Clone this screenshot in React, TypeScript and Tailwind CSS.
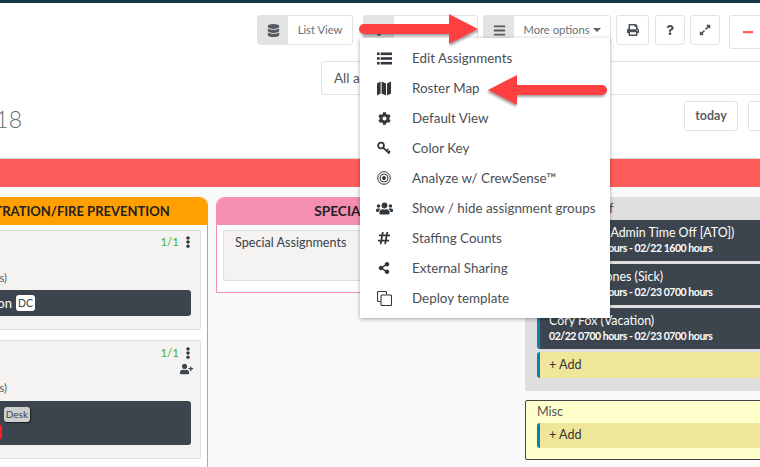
import type { ReactNode } from 'react';
import {
  FaBars,
  FaCog,
  FaDatabase,
  FaEllipsisV,
  FaExpandAlt,
  FaHashtag,
  FaMinus,
  FaPrint,
  FaQuestion,
  FaShareAlt,
  FaUserPlus,
  FaUsers,
} from 'react-icons/fa';

function ListIcon() {
  return (
    <svg viewBox="0 0 15 13" className="h-[13px] w-[15px]" fill="currentColor">
      <rect x="0" y="0.5" width="2.6" height="2.6" />
      <rect x="0" y="5.2" width="2.6" height="2.6" />
      <rect x="0" y="9.9" width="2.6" height="2.6" />
      <rect x="3.6" y="0.5" width="11.4" height="2.6" />
      <rect x="3.6" y="5.2" width="11.4" height="2.6" />
      <rect x="3.6" y="9.9" width="11.4" height="2.6" />
    </svg>
  );
}

function MapIcon() {
  return (
    <svg viewBox="0 0 14 15" className="h-[15px] w-[14px]" fill="currentColor">
      <path d="M0 2.5 L3.6 0.5 V12.5 L0 14.5 Z" />
      <path d="M4.6 0.5 L9 2.5 V14.5 L4.6 12.5 Z" />
      <path d="M10 2.5 L14 0.5 V12.5 L10 14.5 Z" />
    </svg>
  );
}

function KeyIcon() {
  return (
    <svg viewBox="0 0 14 14" className="h-[14px] w-[14px]" fill="none" stroke="currentColor" strokeWidth="1.8">
      <circle cx="4" cy="4.5" r="2.9" />
      <path d="M6 6.6 L12.5 12.6 M9.6 9.9 L11.4 8.2 M11.4 11.6 L13 10" />
    </svg>
  );
}

function TargetIcon() {
  return (
    <svg viewBox="0 0 14 14" className="h-[14px] w-[14px]" fill="none" stroke="currentColor">
      <circle cx="7" cy="7" r="6.3" strokeWidth="1" />
      <circle cx="7" cy="7" r="4" strokeWidth="1" />
      <circle cx="7" cy="7" r="1.6" fill="currentColor" strokeWidth="0.8" />
    </svg>
  );
}

function CloneIcon() {
  return (
    <svg viewBox="0 0 15 15" className="h-[15px] w-[15px]" fill="none" stroke="currentColor" strokeWidth="1.1">
      <path d="M3.5 10.5 H1.5 a1 1 0 0 1 -1 -1 V1.5 a1 1 0 0 1 1 -1 H8.5 a1 1 0 0 1 1 1 V3.5" />
      <rect x="4" y="4" width="10.5" height="10.5" rx="1" />
    </svg>
  );
}

const menuItems: { label: string; icon: ReactNode }[] = [
  { label: 'Edit Assignments', icon: <ListIcon /> },
  { label: 'Roster Map', icon: <MapIcon /> },
  { label: 'Default View', icon: <FaCog className="h-[13px] w-[13px]" /> },
  { label: 'Color Key', icon: <KeyIcon /> },
  { label: 'Analyze w/ CrewSense™', icon: <TargetIcon /> },
  { label: 'Show / hide assignment groups', icon: <FaUsers className="h-[17px] w-[17px]" /> },
  { label: 'Staffing Counts', icon: <FaHashtag className="h-[14px] w-[14px]" /> },
  { label: 'External Sharing', icon: <FaShareAlt className="h-[12px] w-[12px]" /> },
  { label: 'Deploy template', icon: <CloneIcon /> },
];

function ToolbarButton({ icon, label }: { icon: ReactNode; label: ReactNode }) {
  return (
    <div className="flex h-[30px] items-stretch overflow-hidden rounded-[3px] border border-[#e2e2e2] bg-white text-[11.2px] text-[#6b7076]">
      <div className="flex w-[30px] shrink-0 items-center justify-center bg-[#e3e3e3] text-[#555b60]">{icon}</div>
      <div className="flex flex-1 items-center justify-center whitespace-nowrap">{label}</div>
    </div>
  );
}

function IconButton({ children, className }: { children: ReactNode; className: string }) {
  return (
    <div className={`flex h-[30px] shrink-0 items-center justify-center rounded-[3px] border border-[#e2e2e2] bg-white text-[#4a5158] ${className}`}>
      {children}
    </div>
  );
}

function Arrow({ className, flip }: { className: string; flip?: boolean }) {
  return (
    <svg
      viewBox="0 0 120 32"
      className={`absolute h-[32px] w-[120px] drop-shadow-[1px_2px_1px_rgba(0,0,0,0.35)] ${flip ? '-scale-x-100' : ''} ${className}`}
    >
      <path d="M5 11 H90 V1 L119 16 L90 31 V21 H5 a5 5 0 0 1 0 -10 Z" fill="#ff4040" />
    </svg>
  );
}

function CrewCard({ name, dates }: { name: string; dates: string }) {
  return (
    <div className="h-[41px] rounded-l-[3px] border-l-[3px] border-[#0f7fae] bg-[#3c454e] pt-[5px] pl-[9px] whitespace-nowrap text-white">
      <div className="text-[12.4px] leading-[16px]">{name}</div>
      <div className="text-[10.5px] leading-[14px] font-bold tracking-[-0.45px]">{dates}</div>
    </div>
  );
}

function AddRow({ className }: { className: string }) {
  return (
    <div className={`flex items-center rounded-l-[3px] border-l-[3px] border-[#0f7fae] bg-[#f0e69a] pl-[9px] text-[12.6px] text-[#333] ${className}`}>
      + Add
    </div>
  );
}

function Count() {
  return (
    <div className="flex items-center justify-end gap-[4px] text-[11.5px] text-[#4caf1a]">
      1/1
      <FaEllipsisV className="h-[12px] w-[10px] text-[#333]" />
    </div>
  );
}

export default function App() {
  return (
    <div className="relative h-[467px] w-[760px] overflow-hidden bg-white font-['Lato','Open_Sans',sans-serif] text-[#3b4249]">
      <div className="h-[3px] bg-[#17374a]" />

      <div className="mt-[12px] ml-[257px] flex w-[600px] items-start">
        <div className="w-[96px] shrink-0">
          <ToolbarButton icon={<FaDatabase className="h-[13px] w-[13px]" />} label="List View" />
        </div>
        <div className="ml-[10px] w-[115px] shrink-0">
          <ToolbarButton icon={<FaCog className="h-[12px] w-[12px]" />} label="Columns" />
        </div>
        <div className="ml-[5px] w-[128px] shrink-0">
          <ToolbarButton
            icon={<FaBars className="h-[13px] w-[13px]" />}
            label={
              <span className="flex items-center gap-[3px]">
                More options
                <span className="mt-[1px] h-0 w-0 border-x-[4px] border-t-[4px] border-x-transparent border-t-[#5d6268]" />
              </span>
            }
          />
        </div>
        <IconButton className="ml-[5px] w-[33px]">
          <FaPrint className="h-[12px] w-[12px]" />
        </IconButton>
        <IconButton className="ml-[6px] w-[30px]">
          <FaQuestion className="h-[10px] w-[10px]" />
        </IconButton>
        <IconButton className="ml-[5px] w-[30px]">
          <FaExpandAlt className="h-[12px] w-[12px]" />
        </IconButton>
        <IconButton className="ml-[9px] !h-[34px] w-[60px] !justify-start pl-[12px]">
          <FaMinus className="h-[12px] w-[12px] text-[#ff5c5c]" />
        </IconButton>
      </div>

      <div className="mt-[12px] ml-[321px] flex h-[34px] w-[500px] items-center rounded-[3px] border border-[#dfe3e5] bg-white pl-[12px] text-[13.5px] text-[#555]">
        All assignments
      </div>

      <div className="mt-[6px] flex h-[30px] items-center">
        <div className="-ml-[180px] w-[202px] shrink-0 pt-[6px] text-right text-[23px] font-light whitespace-nowrap text-[#5f6b75]">
          February 22, 2018
        </div>
        <div className="ml-[662px] flex h-[30px] w-[54px] shrink-0 items-center justify-center rounded-[3px] border border-[#e2e2e2] text-[12.5px] font-bold text-[#5b6268]">
          today
        </div>
        <div className="ml-[10px] h-[30px] w-[60px] shrink-0 rounded-[3px] border border-[#e2e2e2]" />
      </div>

      <div className="mt-[27px] h-[29px] border-t border-[#d8d8d8] bg-[#ff5c5c]" />

      <div className="flex h-[280px] items-start bg-[#f9f9f9] pt-[10px]">
        <div className="-ml-[100px] h-[276px] w-[308px] shrink-0 rounded-t-[8px] border border-[#ffa000] bg-white">
          <div className="flex h-[27px] items-center justify-center rounded-t-[7px] bg-[#ffa000] text-[13px] font-bold whitespace-nowrap text-[#222]">
            ADMINISTRATION/FIRE PREVENTION
          </div>
          <div className="mx-[6px] mt-[5px] h-[100px] rounded-[2px] border border-[#dedede] bg-[#f4f3f2] pt-[2px] pr-[7px]">
            <Count />
            <div className="mt-[20px] pr-[186px] text-right text-[11px] leading-[16px] text-[#555]">(24 hours)</div>
            <div className="mt-[4px] mr-[2px] flex h-[26px] items-center justify-end rounded-[3px] bg-[#3c454e] pr-[156px] text-[13px] text-white">
              Captain Station
              <span className="ml-[4px] rounded-[3px] bg-white px-[2px] text-[10.5px] leading-[16px] text-[#3c454e]">DC</span>
            </div>
          </div>
          <div className="mx-[6px] mt-[10px] h-[119px] rounded-[2px] border border-[#dedede] bg-[#f4f3f2] pt-[3px] pr-[7px]">
            <Count />
            <div className="mt-[2px] flex justify-end">
              <FaUserPlus className="h-[12px] w-[13px] text-[#3c454e]" />
            </div>
            <div className="mt-[5px] pr-[186px] text-right text-[11px] leading-[16px] text-[#555]">(24 hours)</div>
            <div className="mt-[5px] mr-[2px] h-[44px] overflow-hidden rounded-[3px] bg-[#3c454e] pt-[6px] pr-[161px]">
              <div className="flex justify-end">
                <span className="rounded-[3px] bg-[#cfcfcf] px-[2px] text-[10px] leading-[15px] text-[#3c454e] shadow-[1px_1px_1px_rgba(0,0,0,0.6)]">
                  Desk
                </span>
              </div>
              <div className="mt-[3px] mr-[28px] ml-auto h-[14px] w-[30px] rounded-[2px] bg-[#ff1f1f]" />
            </div>
          </div>
        </div>

        <div className="ml-[8px] h-[96px] w-[301px] shrink-0 rounded-t-[8px] border border-[#f48fb1] bg-white">
          <div className="flex h-[27px] items-center justify-center rounded-t-[7px] bg-[#f48fb1] text-[13.7px] font-bold whitespace-nowrap text-[#222]">
            SPECIAL DUTIES
          </div>
          <div className="mx-[6px] mt-[5px] h-[51px] rounded-[2px] border border-[#dedede] bg-[#f4f3f2] pt-[3px] pl-[11px] text-[12.6px]">
            Special Assignments
          </div>
        </div>

        <div className="ml-[8px] w-[260px] shrink-0">
          <div className="h-[194px] rounded-[2px] bg-[#dfdfdf] pt-[3px] pl-[12px]">
            <div className="h-[20px] text-[12.6px] leading-[18px]">Personnel Off</div>
            <div className="flex flex-col gap-[3px]">
              <CrewCard name="Alan Reed (Admin Time Off [ATO])" dates="02/22 0700 hours - 02/22 1600 hours" />
              <CrewCard name="Matthew Jones (Sick)" dates="02/22 0700 hours - 02/23 0700 hours" />
              <CrewCard name="Cory Fox (Vacation)" dates="02/22 0700 hours - 02/23 0700 hours" />
            </div>
            <AddRow className="mt-[3px] h-[26px]" />
          </div>
          <div className="mt-[9px] h-[60px] rounded-[2px] border border-[#444] bg-[#ffffcc] pt-[2px] pl-[11px]">
            <div className="h-[20px] text-[12.6px] leading-[18px] text-[#555]">Misc</div>
            <AddRow className="h-[25px]" />
          </div>
        </div>
      </div>

      <div className="absolute top-[38px] left-[360px] h-[280px] w-[250px] bg-white pt-[5px] shadow-[0_1px_4px_rgba(0,0,0,0.35)]">
        {menuItems.map((item) => (
          <div key={item.label} className="flex h-[30px] items-center text-[13.4px] whitespace-nowrap text-[#4a4f55]">
            <div className="mr-[4px] flex w-[48px] justify-center text-[#30373d]">{item.icon}</div>
            {item.label}
          </div>
        ))}
      </div>

      <Arrow className="top-[13px] left-[359px]" />
      <Arrow className="top-[74px] left-[487px]" flip />
    </div>
  );
}
